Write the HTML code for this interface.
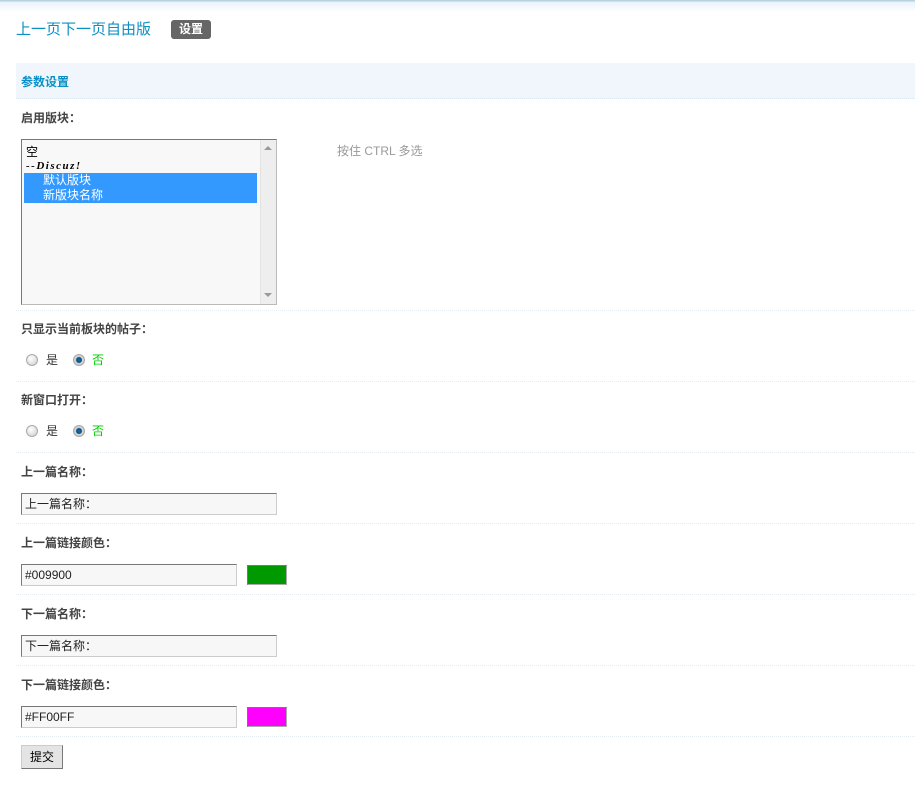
<!DOCTYPE html>
<html><head><meta charset="utf-8"><style>
*{margin:0;padding:0;box-sizing:border-box}
body{width:915px;height:790px;background:#fff;position:relative;overflow:hidden;font-family:"Liberation Sans","Noto Sans CJK SC",sans-serif;font-size:12px;color:#333}
.a{position:absolute;white-space:nowrap}
.top{left:0;top:0;width:915px;height:12px;background:linear-gradient(#b8d2de 0,#b8d2de 1px,#e8f3fb 2px,#fff 12px)}
.lbl{font-weight:bold;color:#444;font-size:12px;line-height:14px}
.sep{left:16px;width:899px;height:0;border-top:1px dotted #e6edf2}
.inp{border:1px solid #777;border-right-color:#ccc;border-bottom-color:#ccc;background:#f7f7f7;height:22px;line-height:20px;padding-left:3px;font-size:12px;color:#222}
.rad{width:12px;height:12px;border-radius:50%;border:1px solid #aaa;background:radial-gradient(circle at 40% 35%,#fff,#ccc)}
.rad.on{background:radial-gradient(circle,#1a6fa8 0,#0b4f80 2.5px,#ddd 3.5px,#bbb 6px)}
</style></head><body>
<div class="a top"></div>
<div class="a" style="left:16px;top:21px;font-size:15px;color:#0a90c5;line-height:18px">上一页下一页自由版</div>
<div class="a" style="left:171px;top:20px;width:40px;height:19px;background:#666;border-radius:3px;color:#fff;font-weight:bold;font-size:12px;line-height:19px;text-align:center">设置</div>
<div class="a" style="left:16px;top:63px;width:899px;height:36px;background:#f0f6fc;border-bottom:1px dotted #d8e6ef"></div>
<div class="a" style="left:21px;top:75px;font-weight:bold;color:#0a90c5;line-height:14px">参数设置</div>

<div class="a lbl" style="left:21px;top:111px">启用版块：</div>
<div class="a" style="left:21px;top:139px;width:256px;height:166px;border:1px solid #777;border-right-color:#bbb;border-bottom-color:#bbb;background:#f8f8f8">
 <div class="a" style="left:4px;top:5px;line-height:14px;color:#000">空</div>
 <div class="a" style="left:4px;top:19px;line-height:14px;color:#000;font-family:'Liberation Serif',serif;font-style:italic;font-weight:bold;font-size:11px;letter-spacing:1.5px">--Discuz!</div>
 <div class="a" style="left:2px;top:33px;width:233px;height:30px;background:#3399ff;color:#fff;line-height:15px;padding-left:19px;font-size:12px">默认版块<br>新版块名称</div>
 <div class="a" style="left:238px;top:0;width:16px;height:164px;background:#eee;border-left:1px solid #e2e2e2"></div>
 <div class="a" style="left:242px;top:6px;width:0;height:0;border:4px solid transparent;border-bottom:4px solid #999;border-top:0"></div>
 <div class="a" style="left:242px;top:153px;width:0;height:0;border:4px solid transparent;border-top:4px solid #999;border-bottom:0"></div>
</div>
<div class="a" style="left:337px;top:144px;color:#999;line-height:14px">按住 CTRL 多选</div>
<div class="a sep" style="top:310px"></div>

<div class="a lbl" style="left:21px;top:322px">只显示当前板块的帖子：</div>
<div class="a rad" style="left:26px;top:354px"></div><div class="a" style="left:46px;top:353px;line-height:14px">是</div>
<div class="a rad on" style="left:73px;top:354px"></div><div class="a" style="left:92px;top:353px;line-height:14px;color:#0c0">否</div>
<div class="a sep" style="top:381px"></div>

<div class="a lbl" style="left:21px;top:393px">新窗口打开：</div>
<div class="a rad" style="left:26px;top:425px"></div><div class="a" style="left:46px;top:424px;line-height:14px">是</div>
<div class="a rad on" style="left:73px;top:425px"></div><div class="a" style="left:92px;top:424px;line-height:14px;color:#0c0">否</div>
<div class="a sep" style="top:452px"></div>

<div class="a lbl" style="left:21px;top:465px">上一篇名称：</div>
<div class="a inp" style="left:21px;top:493px;width:256px">上一篇名称：</div>
<div class="a sep" style="top:523px"></div>

<div class="a lbl" style="left:21px;top:536px">上一篇链接颜色：</div>
<div class="a inp" style="left:21px;top:564px;width:216px">#009900</div>
<div class="a" style="left:247px;top:565px;width:40px;height:20px;background:#009900;border:1px solid #777;border-right-color:#aaa;border-bottom-color:#aaa"></div>
<div class="a sep" style="top:594px"></div>

<div class="a lbl" style="left:21px;top:607px">下一篇名称：</div>
<div class="a inp" style="left:21px;top:635px;width:256px">下一篇名称：</div>
<div class="a sep" style="top:665px"></div>

<div class="a lbl" style="left:21px;top:678px">下一篇链接颜色：</div>
<div class="a inp" style="left:21px;top:706px;width:216px">#FF00FF</div>
<div class="a" style="left:247px;top:707px;width:40px;height:20px;background:#ff00ff;border:1px solid #777;border-right-color:#aaa;border-bottom-color:#aaa"></div>
<div class="a sep" style="top:736px"></div>

<div class="a" style="left:21px;top:745px;width:42px;height:24px;background:#e4e4e4;border:1px solid #ccc;border-right-color:#777;border-bottom-color:#777;color:#000;line-height:22px;text-align:center">提交</div>
</body></html>
